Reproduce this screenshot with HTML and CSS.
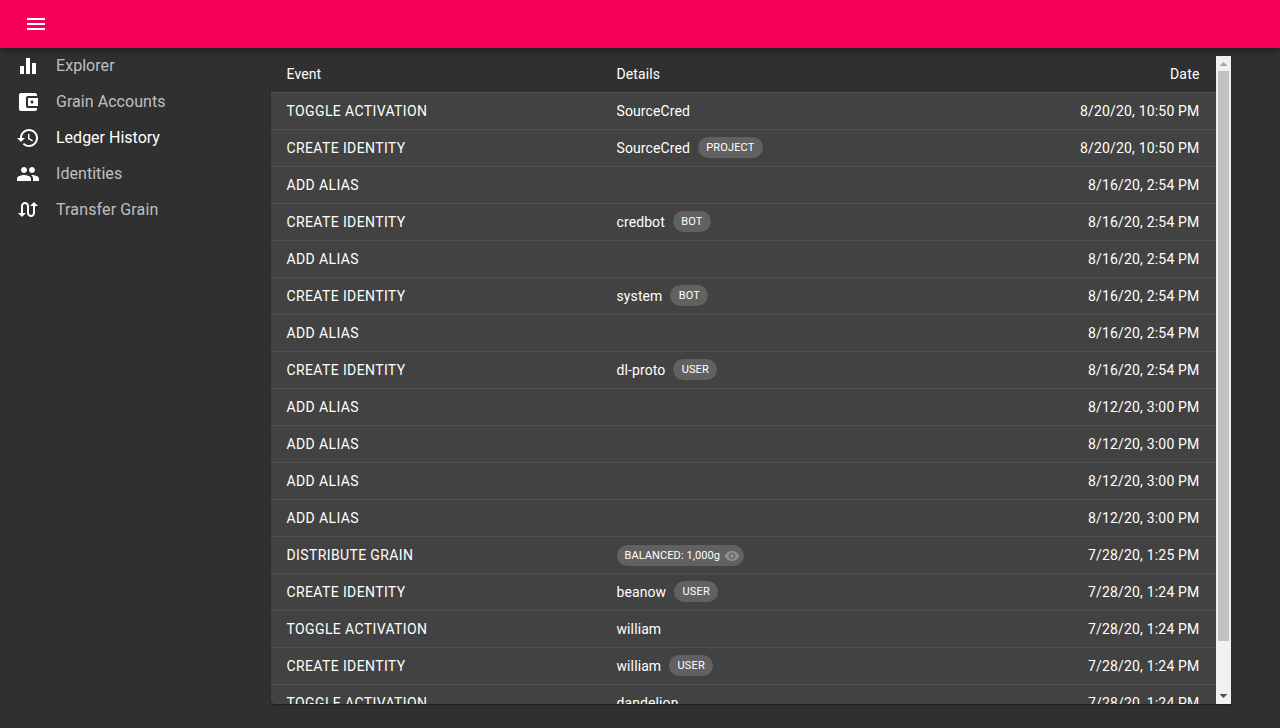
FILE: index.html
```html
<!DOCTYPE html>
<html lang="en">
<head>
<meta charset="utf-8">
<title>Ledger History</title>
<link rel="stylesheet" href="styles.css">
</head>
<body>
<header class="appbar">
  <svg class="icon" viewBox="0 0 24 24"><path d="M3 18h18v-2H3v2zm0-5h18v-2H3v2zm0-7v2h18V6H3z"/></svg>
</header>
<div class="layout">
  <nav class="sidebar">
    <a class="item"><svg class="icon" viewBox="0 0 24 24"><path d="M10 20h4V4h-4v16zm-6 0h4v-8H4v8zM16 9v11h4V9h-4z"/></svg><span>Explorer</span></a>
    <a class="item"><svg class="icon" viewBox="0 0 24 24"><path d="M21 18v1c0 1.1-.9 2-2 2H5c-1.11 0-2-.9-2-2V5c0-1.1.89-2 2-2h14c1.1 0 2 .9 2 2v1h-9c-1.11 0-2 .9-2 2v8c0 1.1.89 2 2 2h9zm-9-2h10V8H12v8zm4-2.5c-.83 0-1.5-.67-1.5-1.5s.67-1.5 1.5-1.5 1.5.67 1.5 1.5-.67 1.5-1.5 1.5z"/></svg><span>Grain Accounts</span></a>
    <a class="item active"><svg class="icon" viewBox="0 0 24 24"><path d="M13 3c-4.97 0-9 4.03-9 9H1l3.89 3.89.07.14L9 12H6c0-3.87 3.13-7 7-7s7 3.13 7 7-3.13 7-7 7c-1.93 0-3.68-.79-4.94-2.06l-1.42 1.42C8.27 19.99 10.51 21 13 21c4.97 0 9-4.03 9-9s-4.03-9-9-9zm-1 5v5l4.28 2.54.72-1.21-3.5-2.08V8H12z"/></svg><span>Ledger History</span></a>
    <a class="item"><svg class="icon" viewBox="0 0 24 24"><path d="M16 11c1.66 0 2.99-1.34 2.99-3S17.66 5 16 5c-1.66 0-3 1.34-3 3s1.34 3 3 3zm-8 0c1.66 0 2.99-1.34 2.99-3S9.66 5 8 5C6.34 5 5 6.34 5 8s1.34 3 3 3zm0 2c-2.33 0-7 1.17-7 3.5V19h14v-2.5c0-2.33-4.67-3.5-7-3.5zm8 0c-.29 0-.62.02-.97.05 1.16.84 1.97 1.97 1.97 3.45V19h6v-2.5c0-2.33-4.67-3.5-7-3.5z"/></svg><span>Identities</span></a>
    <a class="item transfer"><svg class="icon" viewBox="0 0 24 24"><path d="M18 4l-4 4h3v7c0 1.100-.9 2-2 2s-2-.9-2-2V8c0-2.210-1.790-4-4-4S5 5.790 5 8v7H2l4 4 4-4H7V8c0-1.100.9-2 2-2s2 .9 2 2v7c0 2.210 1.790 4 4 4s4-1.790 4-4V8h3l-4-4z"/></svg><span>Transfer Grain</span></a>
  </nav>
  <main class="paper">
    <div class="scroller">
      <div class="row head"><div>Event</div><div>Details</div><div class="date">Date</div></div>
      <div class="row"><div class="event">Toggle Activation</div><div>SourceCred</div><div class="date">8/20/20, 10:50 PM</div></div>
      <div class="row"><div class="event">Create Identity</div><div>SourceCred<span class="chip">PROJECT</span></div><div class="date">8/20/20, 10:50 PM</div></div>
      <div class="row"><div class="event">Add Alias</div><div></div><div class="date">8/16/20, 2:54 PM</div></div>
      <div class="row"><div class="event">Create Identity</div><div>credbot<span class="chip">BOT</span></div><div class="date">8/16/20, 2:54 PM</div></div>
      <div class="row"><div class="event">Add Alias</div><div></div><div class="date">8/16/20, 2:54 PM</div></div>
      <div class="row"><div class="event">Create Identity</div><div>system<span class="chip">BOT</span></div><div class="date">8/16/20, 2:54 PM</div></div>
      <div class="row"><div class="event">Add Alias</div><div></div><div class="date">8/16/20, 2:54 PM</div></div>
      <div class="row"><div class="event">Create Identity</div><div>dl-proto<span class="chip">USER</span></div><div class="date">8/16/20, 2:54 PM</div></div>
      <div class="row"><div class="event">Add Alias</div><div></div><div class="date">8/12/20, 3:00 PM</div></div>
      <div class="row"><div class="event">Add Alias</div><div></div><div class="date">8/12/20, 3:00 PM</div></div>
      <div class="row"><div class="event">Add Alias</div><div></div><div class="date">8/12/20, 3:00 PM</div></div>
      <div class="row"><div class="event">Add Alias</div><div></div><div class="date">8/12/20, 3:00 PM</div></div>
      <div class="row"><div class="event">Distribute Grain</div><div><span class="chip balance">BALANCED: 1,000g<svg class="eye" viewBox="0 0 24 24"><path d="M12 4.500C7 4.500 2.730 7.610 1 12c1.730 4.390 6 7.500 11 7.500s9.270-3.110 11-7.500c-1.730-4.390-6-7.500-11-7.500zM12 17c-2.760 0-5-2.240-5-5s2.240-5 5-5 5 2.240 5 5-2.240 5-5 5zm0-8c-1.660 0-3 1.340-3 3s1.340 3 3 3 3-1.340 3-3-1.340-3-3-3z"/></svg></span></div><div class="date">7/28/20, 1:25 PM</div></div>
      <div class="row"><div class="event">Create Identity</div><div>beanow<span class="chip">USER</span></div><div class="date">7/28/20, 1:24 PM</div></div>
      <div class="row"><div class="event">Toggle Activation</div><div>william</div><div class="date">7/28/20, 1:24 PM</div></div>
      <div class="row"><div class="event">Create Identity</div><div>william<span class="chip">USER</span></div><div class="date">7/28/20, 1:24 PM</div></div>
      <div class="row"><div class="event">Toggle Activation</div><div>dandelion</div><div class="date">7/28/20, 1:24 PM</div></div>
    </div>
    <div class="scrollbar">
      <svg class="arrow up" viewBox="0 0 15 15"><path d="M3.500 10h8l-4-4z"/></svg>
      <div class="thumb"></div>
      <svg class="arrow down" viewBox="0 0 15 15"><path d="M3.500 5h8l-4 4z"/></svg>
    </div>
  </main>
</div>
</body>
</html>
```
FILE: styles.css
```css
* { box-sizing: border-box; }
body {
  margin: 0;
  height: 728px;
  overflow: hidden;
  background: #303030;
  color: #fff;
  font-family: Roboto, sans-serif;
}
.icon { width: 24px; height: 24px; fill: #fff; flex: none; }
.appbar {
  position: relative;
  height: 48px;
  padding: 0 24px;
  display: flex;
  align-items: center;
  background: #f50057;
  box-shadow: 0 2px 4px -1px rgba(0,0,0,.2), 0 4px 5px 0 rgba(0,0,0,.14), 0 1px 10px 0 rgba(0,0,0,.12);
}
.layout { display: flex; height: 680px; }
.sidebar { width: 270.5px; flex: none; }
.item {
  height: 36px;
  padding-left: 16px;
  display: flex;
  align-items: center;
  gap: 16px;
  font-size: 16px;
  line-height: 24px;
  letter-spacing: .05px;
  color: rgba(255,255,255,.7);
}
.item span { margin-top: -1px; }
.active { color: #fff; letter-spacing: 0; }
.transfer { letter-spacing: .13px; }
.paper {
  width: 960px;
  height: 648px;
  margin-top: 8px;
  display: flex;
  overflow: hidden;
  background: #424242;
  border-radius: 4px 0 0 4px;
  box-shadow: 0 2px 1px -1px rgba(0,0,0,.2), 0 1px 1px 0 rgba(0,0,0,.14), 0 1px 3px 0 rgba(0,0,0,.12);
}
.scroller { flex: 1; overflow: hidden; }
.row {
  height: 37px;
  padding: 0 16px;
  display: grid;
  grid-template-columns: 330px 1fr 200px;
  align-items: center;
  border-bottom: 1px solid #515151;
  font-size: 14px;
  line-height: 20px;
  letter-spacing: .1px;
}
.row > div { display: flex; align-items: center; }
.row .date { justify-content: flex-end; letter-spacing: .18px; }
.head { background: #303030; }
.row .event { text-transform: uppercase; letter-spacing: .38px; }
.chip {
  height: 21px;
  margin-left: 8px;
  margin-bottom: 1px;
  padding: 0 8.3px;
  display: inline-flex;
  align-items: center;
  border-radius: 11px;
  background: #616161;
  font-size: 11px;
  letter-spacing: .15px;
}
.balance { margin: 1px 0 0; padding: 1px 4px 0 8px; letter-spacing: .09px; }
.eye { width: 16px; height: 16px; margin: -1px 0 0 4px; fill: #8f8f8f; }
.scrollbar {
  width: 15px;
  display: flex;
  flex-direction: column;
  background: #f1f1f1;
}
.arrow { width: 15px; height: 15px; flex: none; }
.up { fill: #a3a3a3; }
.down { fill: #505050; margin-top: auto; }
.thumb { height: 570px; margin: 0 2px; background: #c1c1c1; }
```
